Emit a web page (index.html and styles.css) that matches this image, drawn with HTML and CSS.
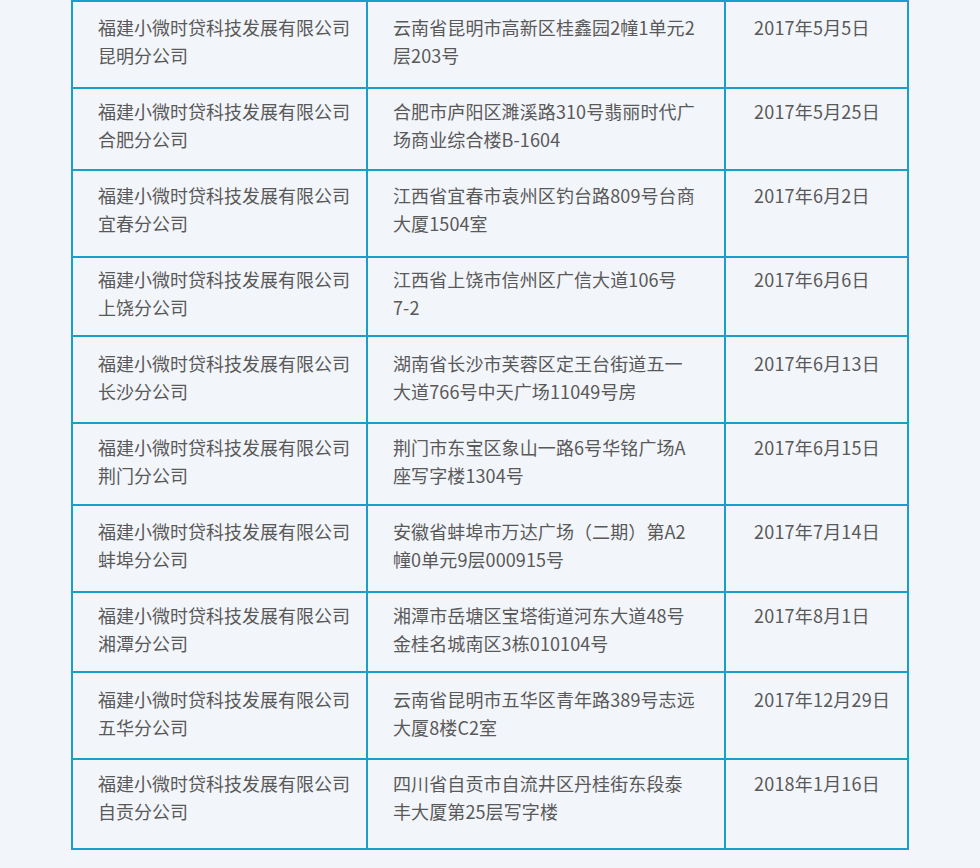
FILE: index.html
```html
<!DOCTYPE html>
<html lang="zh-CN">
<head>
<meta charset="utf-8">
<title>分公司列表</title>
<link rel="stylesheet" href="styles.css">
</head>
<body>
<table class="branch-table">
  <tbody>
    <tr class="r1"><td class="c-name">福建小微时贷科技发展有限公司<br>昆明分公司</td><td class="c-addr">云南省昆明市高新区桂鑫园2幢1单元2<br>层203号</td><td class="c-date">2017年5月5日</td></tr>
    <tr class="r2"><td class="c-name">福建小微时贷科技发展有限公司<br>合肥分公司</td><td class="c-addr">合肥市庐阳区濉溪路310号翡丽时代广<br>场商业综合楼B-1604</td><td class="c-date">2017年5月25日</td></tr>
    <tr class="r3"><td class="c-name">福建小微时贷科技发展有限公司<br>宜春分公司</td><td class="c-addr">江西省宜春市袁州区钓台路809号台商<br>大厦1504室</td><td class="c-date">2017年6月2日</td></tr>
    <tr class="r4"><td class="c-name">福建小微时贷科技发展有限公司<br>上饶分公司</td><td class="c-addr">江西省上饶市信州区广信大道106号<br>7-2</td><td class="c-date">2017年6月6日</td></tr>
    <tr class="r5"><td class="c-name">福建小微时贷科技发展有限公司<br>长沙分公司</td><td class="c-addr">湖南省长沙市芙蓉区定王台街道五一<br>大道766号中天广场11049号房</td><td class="c-date">2017年6月13日</td></tr>
    <tr class="r6"><td class="c-name">福建小微时贷科技发展有限公司<br>荆门分公司</td><td class="c-addr">荆门市东宝区象山一路6号华铭广场A<br>座写字楼1304号</td><td class="c-date">2017年6月15日</td></tr>
    <tr class="r7"><td class="c-name">福建小微时贷科技发展有限公司<br>蚌埠分公司</td><td class="c-addr">安徽省蚌埠市万达广场（二期）第A2<br>幢0单元9层000915号</td><td class="c-date">2017年7月14日</td></tr>
    <tr class="r8"><td class="c-name">福建小微时贷科技发展有限公司<br>湘潭分公司</td><td class="c-addr">湘潭市岳塘区宝塔街道河东大道48号<br>金桂名城南区3栋010104号</td><td class="c-date">2017年8月1日</td></tr>
    <tr class="r9"><td class="c-name">福建小微时贷科技发展有限公司<br>五华分公司</td><td class="c-addr">云南省昆明市五华区青年路389号志远<br>大厦8楼C2室</td><td class="c-date">2017年12月29日</td></tr>
    <tr class="r10"><td class="c-name">福建小微时贷科技发展有限公司<br>自贡分公司</td><td class="c-addr">四川省自贡市自流井区丹桂街东段泰<br>丰大厦第25层写字楼</td><td class="c-date">2018年1月16日</td></tr>
  </tbody>
</table>
</body>
</html>
```

FILE: styles.css
```css
html, body {
  margin: 0;
  padding: 0;
  background: #f2f5f9;
}

body {
  font-family: "Noto Sans CJK SC", "Noto Sans", sans-serif;
  font-size: 18px;
  line-height: 28px;
  color: #595959;
}

.branch-table {
  width: 838px;
  margin: 0 auto;
  border-collapse: separate;
  border-spacing: 0;
  border-top: 2px solid #18a0cb;
  border-left: 2px solid #18a0cb;
  table-layout: fixed;
}

.branch-table td {
  box-sizing: border-box;
  vertical-align: top;
  border-right: 2px solid #18a0cb;
  border-bottom: 2px solid #18a0cb;
  padding: 9px 0 0 25px;
  white-space: nowrap;
}

.branch-table td.c-name { width: 295px; }
.branch-table td.c-addr { width: 358px; letter-spacing: 0.1px; }
.branch-table td.c-date { width: 183px; padding-left: 28px; letter-spacing: 0.2px; }

.branch-table tr.r1 td { height: 87px; padding-top: 11px; }
.branch-table tr.r2 td { height: 82px; padding-top: 8px; }
.branch-table tr.r3 td { height: 87px; padding-top: 10px; }
.branch-table tr.r4 td { height: 79px; padding-top: 7px; }
.branch-table tr.r5 td { height: 87px; padding-top: 12px; }
.branch-table tr.r6 td { height: 82px; padding-top: 9px; }
.branch-table tr.r7 td { height: 87px; padding-top: 11px; }
.branch-table tr.r8 td { height: 80px; padding-top: 8px; }
.branch-table tr.r9 td { height: 87px; padding-top: 12px; }
.branch-table tr.r10 td { height: 90px; padding-top: 9px; }
```
